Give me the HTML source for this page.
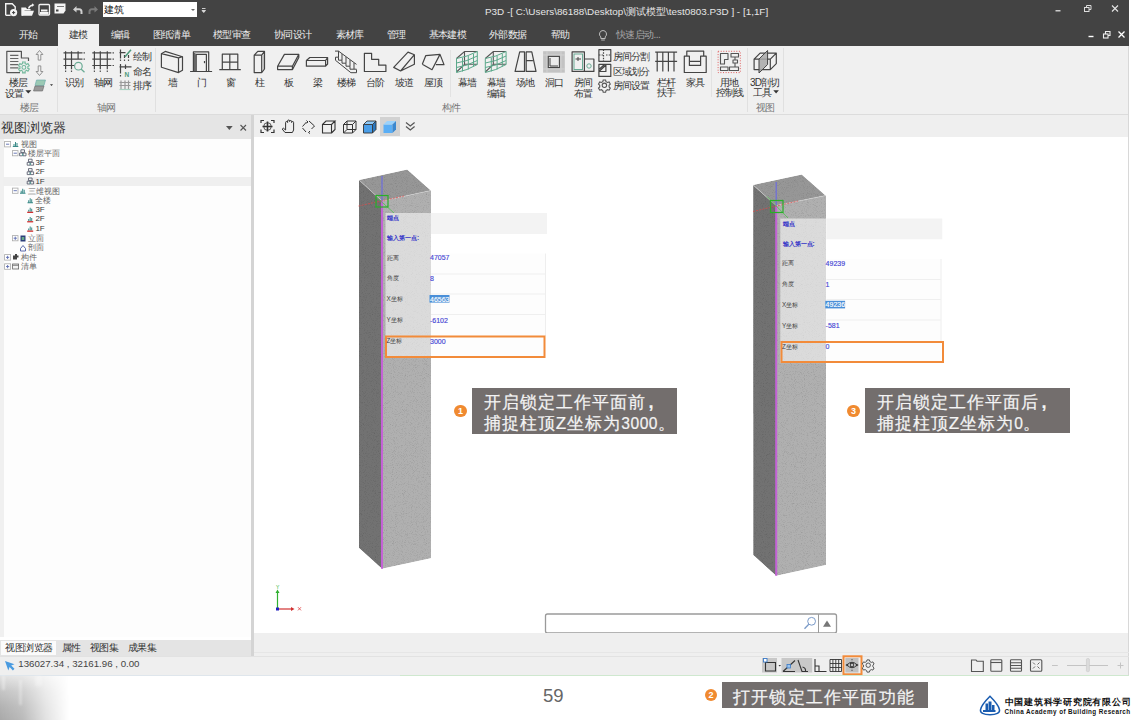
<!DOCTYPE html>
<html><head><meta charset="utf-8">
<style>
*{box-sizing:border-box;margin:0;padding:0}
html,body{width:1137px;height:720px;overflow:hidden;background:#fff;font-family:"Liberation Sans",sans-serif;position:relative}
.a{position:absolute}
.t{position:absolute;white-space:nowrap;line-height:1}
#dark{left:0;top:0;width:1129px;height:46px;background:#434343}
#ribbon{left:0;top:46px;width:1129px;height:68px;background:#f0f0f0}
#rline{left:0;top:114px;width:1129px;height:1px;background:#dcdcdc}
#lphead{left:0;top:115px;width:251px;height:24px;background:#e5e5e5}
#tree{left:0;top:139px;width:251px;height:498px;background:#fdfdfd}
#split{left:251px;top:115px;width:3px;height:541px;background:#d4d4d4}
#vtool{left:254px;top:115px;width:875px;height:22px;background:#efefef}
#view{left:254px;top:137px;width:875px;height:496px;background:#fff}
#vbot{left:254px;top:633px;width:875px;height:23px;background:#efefef}
#ltabs{left:0;top:640px;width:251px;height:16px;background:#e4e4e4}
#status{left:0;top:656px;width:1129px;height:19px;background:#efefef}
#rborder{left:1128px;top:46px;width:1px;height:629px;background:#d8d8d8}
.tab{color:#ececec;font-size:10px;letter-spacing:-0.6px;top:30px}
.rl{color:#333;font-size:10px;letter-spacing:-0.8px}
.gl{color:#777;font-size:10px;letter-spacing:-0.6px;top:103px}
.tr{font-size:8px;color:#666;font-family:"Liberation Serif",serif;margin-top:0.8px}
.tl{color:#383838;font-size:8px;font-family:"Liberation Sans",sans-serif;margin-top:0}
.dq{font-size:6.3px;color:#3434c8;font-weight:bold}
.dg{font-size:6.3px;color:#3e3e3e}
.dv{font-size:7px;color:#4646d4;font-weight:normal;-webkit-text-stroke:0.15px #4646d4}
.co{background:#736e6d}
.ct{color:#f4f4f4;font-size:17px;line-height:21.5px;letter-spacing:1.05px;-webkit-text-stroke:0.2px #f4f4f4}
.cm{font-size:18px;font-weight:bold;margin-left:2.5px}
.dn{font-size:15.6px;letter-spacing:0.5px}
.num{width:12.6px;height:12.6px;border-radius:50%;background:#f08a30;color:#fff;font-size:9px;font-weight:bold;text-align:center;line-height:12.8px}
.sep{position:absolute;width:1px;background:#e0e0e0}
</style></head><body>
<div id="dark" class="a"></div>
<div id="ribbon" class="a"></div>
<div id="rline" class="a"></div>
<div id="lphead" class="a"></div>
<div id="tree" class="a"></div><div class="a" style="left:0;top:139px;width:3.5px;height:498px;background:#f0f0f0"></div>
<div id="split" class="a"></div>
<div id="vtool" class="a"></div>
<div id="view" class="a"></div>
<div id="vbot" class="a"></div>
<div id="ltabs" class="a"></div>
<div id="status" class="a"></div>
<div id="rborder" class="a"></div>

<!-- TITLE BAR -->
<svg class="a" style="left:0;top:0" width="110" height="22" viewBox="0 0 110 22">
 <g fill="none" stroke="#f4f4f4" stroke-width="1.4">
  <path d="M5.7 15.3V3.8h6.5l3 3v3"/><path d="M5.7 15.3h5"/>
 </g>
 <circle cx="13.6" cy="12.6" r="3.6" fill="#f4f4f4"/><path d="M12 12.6h3.2M13.6 11v3.2" stroke="#434343" stroke-width="1"/>
 <path d="M21.3 7.5h4.5l1.3 1.5h3.5v1.5h-6l-1.5 5.3h-1.8z" fill="#f4f4f4"/><path d="M23.5 10.8h10.5l-2 5h-10z" fill="#f4f4f4"/><path d="M28.5 8.5c.8-2 2.5-3.3 4.5-3.5" stroke="#f4f4f4" stroke-width="1.4" fill="none"/><path d="M32 3.3l2.3 1.6-2.1 1.9z" fill="#f4f4f4"/>
 <rect x="39" y="4.5" width="10.5" height="10.5" rx="1" fill="none" stroke="#f4f4f4" stroke-width="1.3"/>
 <rect x="41" y="9.5" width="6.5" height="2" fill="#f4f4f4"/><rect x="40" y="12" width="8.5" height="2.5" fill="#f4f4f4"/>
 <path d="M54.5 3.5h11v7l-2 3h-9z" fill="#f4f4f4"/><rect x="56" y="9.5" width="2.5" height="2" fill="#434343"/><rect x="57" y="6" width="7" height="1" fill="#777"/>
 <path d="M73 9.5l3.5-3.5v2.2h2.5c2.5 0 3.5 1.5 3.5 3.5V14h-2v-2.2c0-1-0.5-1.6-1.5-1.6h-2.5v2.3z" fill="#cfcfcf"/>
 <path d="M98 9.5l-3.5-3.5v2.2H92c-2.5 0-3.5 1.5-3.5 3.5V14h2v-2.2c0-1 .5-1.6 1.5-1.6h2.5v2.3z" fill="#7a7a7a"/>
</svg>
<div class="a" style="left:103px;top:2px;width:94px;height:15px;background:#fff"></div>
<div class="t" style="left:103.5px;top:4.5px;font-size:10px;color:#111">建筑</div>
<svg class="a" style="left:188px;top:6px" width="20" height="10"><path d="M3 3h4l-2 2z" fill="#666"/><path d="M14 2.5h3.5M14 4.5h3.5l-1.75 2z" stroke="#ddd" stroke-width="0.9" fill="#ddd"/></svg>
<div class="t" id="title" style="left:485px;top:6.7px;font-size:9.9px;color:#e6e6e6">P3D -[ C:\Users\86188\Desktop\测试模型\test0803.P3D ] - [1,1F]</div>
<svg class="a" style="left:1050px;top:0" width="79" height="46">
 <path d="M5.5 10.8h5" stroke="#eee" stroke-width="1.2"/>
 <g fill="none" stroke="#ddd" stroke-width="1"><rect x="34.5" y="7.5" width="4.5" height="4"/><path d="M36.5 7.5V5.5h4.5v4h-2"/></g>
 <path d="M62 5.5l6 6M68 5.5l-6 6" stroke="#e6e6e6" stroke-width="1.1"/>
 <path d="M38.5 36.5h5" stroke="#fff" stroke-width="1.4"/>
 <g fill="none" stroke="#eee" stroke-width="1.1"><rect x="53.5" y="34" width="4.5" height="4"/><path d="M55.5 34V31.5h4.5v4h-2"/></g>
 <path d="M68.5 31.5l6 6M74.5 31.5l-6 6" stroke="#fff" stroke-width="1.3"/>
</svg>

<!-- TABS -->
<div class="a" style="left:58px;top:24px;width:41px;height:22px;background:#f0f0f0"></div>
<div class="t tab" style="left:19px">开始</div>
<div class="t tab" style="left:69px;color:#333">建模</div>
<div class="t tab" style="left:110.5px">编辑</div>
<div class="t tab" style="left:152.5px">图纸清单</div>
<div class="t tab" style="left:213px">模型审查</div>
<div class="t tab" style="left:274px">协同设计</div>
<div class="t tab" style="left:335.5px">素材库</div>
<div class="t tab" style="left:386.5px">管理</div>
<div class="t tab" style="left:428.5px">基本建模</div>
<div class="t tab" style="left:489px">外部数据</div>
<div class="t tab" style="left:550.5px">帮助</div>
<svg class="a" style="left:597px;top:29px" width="12" height="13"><path d="M6 1.5a3.6 3.6 0 0 0-2.2 6.4V9.5h4.4V7.9A3.6 3.6 0 0 0 6 1.5zM4.2 11h3.6" fill="none" stroke="#bbb" stroke-width="1"/></svg>
<div class="t tab" style="left:616px;color:#a8a8a8">快速启动...</div>


<!-- RIBBON -->
<div class="sep" style="left:57px;top:48px;height:64px"></div>
<div class="sep" style="left:155px;top:48px;height:64px"></div>
<div class="sep" style="left:449.5px;top:50px;height:47px;background:#e2e2e2"></div>
<div class="sep" style="left:711px;top:50px;height:47px;background:#e2e2e2"></div>
<div class="sep" style="left:747px;top:48px;height:64px"></div>
<div class="sep" style="left:783px;top:48px;height:64px"></div>
<svg class="a" style="left:0;top:0" width="800" height="114" viewBox="0 0 800 114">
<g fill="none" stroke="#555" stroke-width="1.2" stroke-linejoin="round">
 <!-- 楼层设置 -->
 <path d="M20 72.6H6.8V51.3h14.6V58h7.1v3"/>
 <path d="M10.1 55.4h8.3M10.1 58.5h8.3M10.1 61.5h8.3M10.1 64.6h8.3M10.1 67.8h8.3" stroke="#666"/>
 <!-- arrows -->
 <path d="M39.5 50.5l-3.4 4h2.1v5.6h2.6v-5.6h2.1z" stroke="#888" stroke-width="0.9"/>
 <path d="M39.5 75.5l-3.4-4h2.1v-5.6h2.6v5.6h2.1z" stroke="#888" stroke-width="0.9"/>
 <!-- 识别 grid -->
 <path d="M63.5 52.9h19M63.5 59.2h19M63.5 65.5h12M65.6 51.2v18M71.5 51.2v18M78.1 51.2v8" stroke="#444"/>
 <path d="M83.5 52.9h1.5M83.5 59.2h1.5M65.6 70.5v1.5M71.5 70.5v1.5" stroke="#555"/>
 <!-- 轴网 grid -->
 <path d="M92.3 52.9h19M92.3 59.2h19M92.3 65.5h19M94.4 51.2v18M100.3 51.2v18M107.3 51.2v18" stroke="#444"/>
 <path d="M112.5 52.9h1.5M112.5 59.2h1.5M112.5 65.5h1.5M94.4 70.5v1.5M100.3 70.5v1.5M107.3 70.5v1.5" stroke="#555"/>
 <!-- small grid icons -->
 <path d="M120.5 49.5v9M119.5 52.6h6M124.5 55v3M128.5 55v3" stroke="#444"/>
 <path d="M120.5 59.5v1.5M124.5 59.5v1.5M128.5 59.5v1.5" stroke="#555"/>
 <path d="M120.5 64v9.5M119.5 66.8h12M125.5 64.5v4.5M120.5 75v1.5" stroke="#444"/>
 <path d="M121 80.5v9M125 80.5v9M128.5 80.5v9M119.5 82.5h11M119.5 85.5h11" stroke="#999"/>
 <!-- 墙 -->
 <path d="M161.4 53.7L178.5 57.8V72.6L161.4 67.3z M161.4 53.7L165.2 51.4L182.5 56.7L178.5 57.8 M182.5 56.7V70.3L178.5 72.6" stroke="#444"/>
 <!-- 门 -->
 <path d="M193.4 71.4V51.9h15.3v19.5 M196.2 71.4V54.4h10.2v17 M194.8 53v18.4 M190.1 71.5h22" stroke="#444"/>
 <path d="M204.5 61v2.2" stroke="#444"/>
 <!-- 窗 -->
 <path d="M222.3 69.6V54.2h15.5v15.4 M229.8 54.2v15.4 M222.3 62.2h15.5 M219.3 69.6h21.5" stroke="#444"/>
 <!-- 柱 -->
 <path d="M254.2 55.2h7.5v17.4h-7.5z M254.2 55.2l3.6-3.8h6.7l-2.8 3.8 M264.5 51.4v17.4l-2.8 3.8" stroke="#444"/>
 <path d="M262.2 56l1.8-2.5v15l-1.8 2.5z" fill="#bbb" stroke="none"/>
 <!-- 板 -->
 <path d="M277.6 66.2l6.8-11.8h14.4l-6.4 11.8z M277.6 66.2v3.4h14.8v-3.4 M292.4 69.6l6.4-12.1v-3.1" stroke="#444"/>
 <!-- 梁 -->
 <path d="M306.4 60.5h19.2v5.7h-19.2z M306.4 60.5l3.4-3h17.8l-2 3 M327.6 57.5v6.5l-2 2.2" stroke="#444"/>
 <!-- 楼梯 -->
 <path d="M335 51.1h3.5l18 13.3 M338.5 51.1v6 M342 54v6 M346 57v6 M350 60v6 M354 63v6 M335.5 57.2v3.1l15.4 12.4h5.6v-3.2 M335.5 57.2h3v3h3.5v3h4v3h4v3h6.5" stroke="#444" stroke-width="1"/>
 <!-- 台阶 -->
 <path d="M364.4 53.3h7.2v6h7.1v5.9h7.2v6.3h-21.5z" stroke="#444"/>
 <!-- 坡道 -->
 <path d="M393.7 67.4L408 52.1l6.4 2.6v9.5l-13.8 6.8z M400.6 71L414.4 54.7" stroke="#444"/>
 <!-- 屋顶 -->
 <path d="M422.3 64.2l3.4-8.5 14.3-1.3 4 10.2h-8.1 M422.3 64.2l9.7 5.5 8-15.3" stroke="#444"/>
 <!-- 场地 -->
 <path d="M515.1 71.4l4.6-19.5h4.8v19.5z M526.2 71.4V51.9h5.6l4.2 19.5z M526.2 60.6h6.7" stroke="#444"/>
 <!-- 房间布置 -->
 <path d="M572.1 71.4V51.9h12.3v19.5z M584.4 59h9.5v12.4h-9.5" stroke="#444"/>
 <!-- 房间分割 -->
 <path d="M598.9 49.6h11.9v11.7h-11.9z" stroke="#444"/>
 <path d="M603.5 49.6v11.7M598.9 55h4.6M606 55h4.8" stroke="#444" stroke-dasharray="1.5 1.2"/>
 <!-- 区域划分 -->
 <path d="M598.9 64.4h11.9v12h-11.9z M598.9 71.5h7v-7 M599.5 69l5-4.5M599.5 71l6.5-6" stroke="#444"/>
 <!-- 栏杆 -->
 <path d="M657.2 51.6v20M662.8 51.6v20M668.4 51.6v20M674 51.6v20M655.2 52.1h21.9M655.2 61.3h21.9" stroke="#444"/>
 <!-- 家具 -->
 <path d="M686.8 56.2V51.1h16.9v5.1 M684.3 56.2h5.1V65.4h11.2V56.2h5.6v16.3h-21.9z M689.4 61.3h11.2" stroke="#444"/>
 <!-- 用地控制线 -->
 <path d="M718.1 51.3h22.2v21.3h-22.2z" stroke="#e06060" stroke-width="1" stroke-dasharray="1 1.6"/>
 <path d="M720.5 53.5h7.5v6h-3.5v4.5h-4z M731 53.5h7.5v3.5h-7.5z M733 60h4.5v3h-4.5z M720.5 67h7.5v3.5h-7.5z M729.5 67h9v3.5h-9z M735 57v3M735 63v4" stroke="#555" stroke-width="1.1"/>
 <!-- 3D剖切 -->
 <path d="M754.1 59.1h16.2v10.5h-16.2z M754.1 59.1l6-6h16.2l-6 6 M776.3 53.1v10.5l-6 6" stroke="#444"/>
</g>
<!-- gear teal 楼层设置 -->
<g transform="translate(23.9 67.4)" fill="none" stroke="#72b89c" stroke-width="1.1">
 <circle r="1.9"/><path d="M-1.55 -3.69 L-1.14 -3.84 L-1.31 -5.45 L1.31 -5.45 L1.14 -3.84 L1.55 -3.69 L2.42 -3.19 L2.75 -2.90 L4.06 -3.85 L5.37 -1.59 L3.89 -0.93 L3.97 -0.50 L3.97 0.50 L3.89 0.93 L5.37 1.59 L4.06 3.85 L2.75 2.90 L2.42 3.19 L1.55 3.69 L1.14 3.84 L1.31 5.45 L-1.31 5.45 L-1.14 3.84 L-1.55 3.69 L-2.42 3.19 L-2.75 2.90 L-4.06 3.85 L-5.37 1.59 L-3.89 0.93 L-3.97 0.50 L-3.97 -0.50 L-3.89 -0.93 L-5.37 -1.59 L-4.06 -3.85 L-2.75 -2.90 L-2.42 -3.19Z"/>
</g>
<!-- stack icon -->
<path d="M36.5 80h9l-1.5 5.5h-9z" fill="#9bc9b4" stroke="#6aa" stroke-width="0.6"/>
<path d="M35 86h9l-1.5 5h-9z" fill="#999" stroke="#666" stroke-width="0.6"/>
<path d="M50 84.3h3l-1.5 1.6z" fill="#333"/>
<path d="M25.3 90.3h6l-3 3.3z" fill="#333"/>
<!-- magnifier -->
<circle cx="78.4" cy="66.2" r="3.8" fill="#f0f0f0" stroke="#6aab95" stroke-width="1.2"/>
<path d="M81 69l3.5 3.2" stroke="#6aab95" stroke-width="1.3"/>
<path d="M125 56.7l6-7" stroke="#4d9a7a" stroke-width="1.5"/>
<text x="124.6" y="77.2" font-family="Liberation Sans" font-weight="bold" font-size="6.5" fill="#4d9a7a">N</text>
<path d="M119.5 89.5h11" stroke="#a8d0c0" stroke-width="1.2"/>
<!-- 幕墙 -->
<g id="cw">
<path d="M456.5 58.5L464.5 51.5H477.3M464.5 51.5V64.3H477.3M464.5 64.3L456.5 72" stroke="#555" stroke-width="1.1" fill="none"/>
<path d="M456.5 58.5Q467 57 477.3 51.5V64.5Q467 70.5 456.5 72.5Z M462.5 57.8V71.5M468.3 56V69.5M473.5 53.8V66.5M456.5 63Q467 61.5 477.3 56M456.5 67.5Q467 66 477.3 60.5" stroke="#5aa88a" stroke-width="1" fill="none"/>
</g>
<use href="#cw" x="28.8" y="0"/>
<!-- 洞口 -->
<rect x="543.1" y="51.2" width="21.7" height="21.5" fill="#c3c3c3"/>
<path d="M547 51.2v21.5M561 51.2v21.5M543.1 55h21.7M543.1 69h21.7" stroke="#d6d6d6" stroke-width="0.8"/>
<rect x="548.3" y="56.4" width="11.1" height="11.1" fill="#ececec" stroke="#444" stroke-width="1.1"/>
<path d="M550 58v8h8" stroke="#444" stroke-width="1" fill="none"/>
<!-- 房间布置 teal -->
<rect x="574" y="54" width="8.5" height="15.5" fill="none" stroke="#6aab95" stroke-width="1"/>
<path d="M575.5 59h5.5M578 57v4" stroke="#444" stroke-width="1"/>
<circle cx="589" cy="66" r="2.2" fill="none" stroke="#6aab95" stroke-width="1"/>
<!-- gear 房间设置 -->
<g transform="translate(604.4 85.3)" fill="none" stroke="#555" stroke-width="1.1">
 <circle r="2.2"/><path d="M-1.2-5.3h2.4l.4 1.6 1.5.9 1.6-.5 1.2 2.1-1.2 1.1v1.8l1.2 1.1-1.2 2.1-1.6-.5-1.5.9-.4 1.6h-2.4l-.4-1.6-1.5-.9-1.6.5-1.2-2.1 1.2-1.1V-.1l-1.2-1.1 1.2-2.1 1.6.5 1.5-.9z"/>
</g>
<!-- 3D plane -->
<path d="M759 73l0-14 8.6-8.5v14z" fill="#a8a8a8" fill-opacity="0.85" stroke="#444" stroke-width="1"/>
<path d="M773.3 90.3h5.6l-2.8 3.3z" fill="#333"/>
</svg>
<div class="t rl" style="left:8.5px;top:77.5px">楼层</div>
<div class="t rl" style="left:5px;top:88.5px">设置</div>
<div class="t gl" style="left:20px">楼层</div>
<div class="t rl" style="left:65px;top:77.5px">识别</div>
<div class="t rl" style="left:94px;top:77.5px">轴网</div>
<div class="t rl" style="left:133px;top:51.5px">绘制</div>
<div class="t rl" style="left:133px;top:66.5px">命名</div>
<div class="t rl" style="left:133px;top:81px">排序</div>
<div class="t gl" style="left:97px">轴网</div>
<div class="t rl" style="left:167.5px;top:77.5px">墙</div>
<div class="t rl" style="left:196.5px;top:77.5px">门</div>
<div class="t rl" style="left:225.5px;top:77.5px">窗</div>
<div class="t rl" style="left:254.5px;top:77.5px">柱</div>
<div class="t rl" style="left:283.5px;top:77.5px">板</div>
<div class="t rl" style="left:312.5px;top:77.5px">梁</div>
<div class="t rl" style="left:336.5px;top:77.5px">楼梯</div>
<div class="t rl" style="left:365.5px;top:77.5px">台阶</div>
<div class="t rl" style="left:395px;top:77.5px">坡道</div>
<div class="t rl" style="left:423.5px;top:77.5px">屋顶</div>
<div class="t rl" style="left:457.5px;top:77.5px">幕墙</div>
<div class="t rl" style="left:486.5px;top:77.5px">幕墙</div>
<div class="t rl" style="left:486.5px;top:88.5px">编辑</div>
<div class="t rl" style="left:516px;top:77.5px">场地</div>
<div class="t rl" style="left:545px;top:77.5px">洞口</div>
<div class="t rl" style="left:573.5px;top:77.5px">房间</div>
<div class="t rl" style="left:573.5px;top:88.5px">布置</div>
<div class="t rl" style="left:612.5px;top:51.5px">房间分割</div>
<div class="t rl" style="left:612.5px;top:67px">区域划分</div>
<div class="t rl" style="left:612.5px;top:81px">房间设置</div>
<div class="t rl" style="left:657px;top:77.5px">栏杆</div>
<div class="t rl" style="left:657px;top:88px">扶手</div>
<div class="t rl" style="left:686px;top:77.5px">家具</div>
<div class="t rl" style="left:720px;top:77.5px">用地</div>
<div class="t rl" style="left:715.5px;top:88px">控制线</div>
<div class="t rl" style="left:750px;top:77.5px">3D剖切</div>
<div class="t rl" style="left:753px;top:88px">工具</div>
<div class="t gl" style="left:441.5px">构件</div>
<div class="t gl" style="left:756px">视图</div>

<!-- LEFT PANEL -->
<div class="t" style="left:1px;top:122.2px;font-size:12.5px;color:#333">视图浏览器</div>
<svg class="a" style="left:220px;top:119px" width="30" height="18"><path d="M6 7h6.7l-3.35 4z" fill="#555"/><path d="M20.5 6l5.5 5.5M26 6l-5.5 5.5" stroke="#555" stroke-width="1.1"/></svg>
<div class="a" style="left:3px;top:177px;width:248px;height:9px;background:#efefef"></div>
<svg class="a" style="left:0;top:138px" width="70" height="135" viewBox="0 138 70 135">
 <g fill="#fff" stroke="#aaa" stroke-width="0.8">
  <rect x="4.6" y="141.4" width="6" height="5.5"/>
  <rect x="12.5" y="150.6" width="5.5" height="5.2"/>
  <rect x="12.5" y="188.1" width="5.5" height="5.2"/>
  <rect x="12.5" y="235.6" width="5.5" height="5.2"/>
  <rect x="4.6" y="254.6" width="6" height="5.5"/>
  <rect x="4.6" y="263.8" width="6" height="5.5"/>
 </g>
 <g stroke="#5b6bb0" stroke-width="0.9">
  <path d="M6 144.2h3.2M13.6 153.2h3.3M13.6 190.7h3.3M13.6 238.2h3.3M15.25 236.6v3.3M6 257.35h3.2M7.6 255.8v3.2M6 266.55h3.2M7.6 265v3.2"/>
 </g>
 <!-- bar icons -->
 <g fill="#3a8a88">
  <path d="M12.8 147h5.5v-1h-5.5z M13.5 146v-2h1v2z M15 146v-4h1v4z M16.5 146v-3h1v3z"/>
  <path d="M20 193.8h5.5v-1H20z M20.7 192.8v-2h1v2z M22.2 192.8v-4h1v4z M23.7 192.8v-3h1v3z"/>
  <path d="M27.5 203.3h5.5v-1h-5.5z M28.2 202.3v-2h1v2z M29.7 202.3v-4h1v4z M31.2 202.3v-3h1v3z"/>
  <path d="M28.2 211.7v-2h1v2z M29.7 211.7v-4h1v4z M31.2 211.7v-3h1v3z"/>
  <path d="M28.2 221.1v-2h1v2z M29.7 221.1v-4h1v4z M31.2 221.1v-3h1v3z"/>
  <path d="M28.2 230.5v-2h1v2z M29.7 230.5v-4h1v4z M31.2 230.5v-3h1v3z"/>
 </g>
 <g fill="#d03030"><rect x="27.2" y="211.7" width="6" height="1.3"/><rect x="27.2" y="221.1" width="6" height="1.3"/><rect x="27.2" y="230.5" width="6" height="1.3"/></g>
 <!-- plan icons -->
 <g fill="none" stroke="#555a6a" stroke-width="0.85"><path d="M20.900000000000002 149.8h3.6v2.6h-3.6z M19.6 153.0h3v2.8h-3z M23.0 153.0h3v2.8h-3z"/><path d="M28.5 159.2h3.6v2.6h-3.6z M27.2 162.39999999999998h3v2.8h-3z M30.599999999999998 162.39999999999998h3v2.8h-3z"/><path d="M28.5 168.6h3.6v2.6h-3.6z M27.2 171.79999999999998h3v2.8h-3z M30.599999999999998 171.79999999999998h3v2.8h-3z"/><path d="M28.5 178h3.6v2.6h-3.6z M27.2 181.2h3v2.8h-3z M30.599999999999998 181.2h3v2.8h-3z"/></g>
 <g fill="#5aa8a0"><rect x="22" y="153.6" width="1.2" height="2"/><rect x="29.6" y="163" width="1.2" height="2"/><rect x="29.6" y="172.4" width="1.2" height="2"/><rect x="29.6" y="181.8" width="1.2" height="2"/></g>
 <rect x="20.5" y="235.5" width="5" height="6" fill="#2d3e7a"/><rect x="21.7" y="237" width="2.6" height="3" fill="#6a8"/>
 <path d="M20.5 248.5l2.5-3 2.5 3v2.5h-5z" fill="none" stroke="#4a5aa0" stroke-width="0.9"/>
 <path d="M13 255.5h2v-1.5h2v1.5h1.5v2h-1.5v2h-4z" fill="#444"/>
 <rect x="12.6" y="264" width="6" height="5" fill="#f4f4f4" stroke="#666" stroke-width="0.8"/><path d="M12.6 265.3h6" stroke="#666" stroke-width="0.8"/>
</svg>
<div class="t tr" style="left:21px;top:140.2px">视图</div>
<div class="t tr" style="left:28px;top:149.7px">楼层平面</div>
<div class="t tr tl" style="left:35.4px;top:159px">3F</div>
<div class="t tr tl" style="left:35.4px;top:168.4px">2F</div>
<div class="t tr tl" style="left:35.4px;top:177.8px">1F</div>
<div class="t tr" style="left:28px;top:187.2px">三维视图</div>
<div class="t tr" style="left:35.4px;top:196.6px">全楼</div>
<div class="t tr tl" style="left:35.4px;top:205.9px">3F</div>
<div class="t tr tl" style="left:35.4px;top:215.3px">2F</div>
<div class="t tr tl" style="left:35.4px;top:224.7px">1F</div>
<div class="t tr" style="left:28px;top:234.3px">立面</div>
<div class="t tr" style="left:28px;top:243.6px">剖面</div>
<div class="t tr" style="left:21px;top:253.2px">构件</div>
<div class="t tr" style="left:21px;top:262.5px">清单</div>
<!-- bottom tabs -->
<div class="a" style="left:1px;top:640.5px;width:55px;height:14.5px;background:#fbfbfb"></div>
<div class="t" style="left:5px;top:643px;font-size:10px;letter-spacing:-0.4px;color:#333">视图浏览器</div>
<div class="t" style="left:61.5px;top:643px;font-size:10px;letter-spacing:-0.4px;color:#333">属性</div>
<div class="t" style="left:89.5px;top:643px;font-size:10px;letter-spacing:-0.4px;color:#333">视图集</div>
<div class="t" style="left:127.5px;top:643px;font-size:10px;letter-spacing:-0.4px;color:#333">成果集</div>
<!-- status -->
<svg class="a" style="left:4px;top:660px" width="12" height="11"><path d="M1 1l9.5 3.2-3.3 1.3 3.3 3.3-1.6 1.6-3.3-3.3-1.3 3.3z" fill="#4a9be0"/></svg>
<div class="t" id="coords" style="left:18.3px;top:659px;font-size:9.7px;color:#444">136027.34 , 32161.96 , 0.00</div>

<!-- VIEWPORT TOOLBAR -->
<div class="a" style="left:380px;top:116.7px;width:19.5px;height:19px;background:#d2d2d2"></div>
<svg class="a" style="left:254px;top:115px" width="170" height="22" viewBox="254 115 170 22">
 <g fill="none" stroke="#333" stroke-width="1.2">
  <path d="M261 123v-2.5h3M271 120.5h3v2.5M274 129.5v3h-3M264 132.5h-3v-3"/>
  <path d="M267.5 121.5v10M262.5 126.5h10" stroke-width="1.6"/>
  <circle cx="267.5" cy="126.5" r="3.8" stroke-width="0.8"/>
  <path d="M285 132.5l-2.8-3.5 1.2-.8 2.2 1.8v-7.5a1 1 0 0 1 2 0v-1.5a1 1 0 0 1 2 0v.5a1 1 0 0 1 2 0v1a1 1 0 0 1 2 0v7.5l-1.2 2.5z" stroke-width="1"/>
  <path d="M302.5 126.5l4-4.5M309 121l5.5 5-3 3M306 132l-3.5-4" stroke-width="1"/>
  <path d="M306.5 120.5l1.5 1.5-1.5 1.2M310 131l-1.5 1.5 1.5 1" stroke-width="1"/>
  <path d="M322.5 124.5h9v8.5h-9z M322.5 124.5l3.5-3.5h9l-3.5 3.5 M335 121v8.5l-3.5 3.5" stroke-width="1.1"/>
  <path d="M343.5 124.5h9v8.5h-9z M343.5 124.5l3.5-3.5h9l-3.5 3.5 M356 121v8.5l-3.5 3.5 M347 121v8.5h9M347 129.5l-3.5 3.5" stroke-width="1"/>
  <path d="M406 122.5l4.3 3.5 4.3-3.5M406 126.5l4.3 3.5 4.3-3.5" stroke="#555" stroke-width="1.2"/>
 </g>
 <path d="M363.5 124.5h9v8.5h-9z" fill="#4a9ee8"/><path d="M363.5 124.5l3.5-3.5h9l-3.5 3.5z" fill="#8cc8f8"/><path d="M372.5 124.5l3.5-3.5v8.5l-3.5 3.5z" fill="#2a78c0"/>
 <path d="M363.5 124.5h9v8.5h-9z M363.5 124.5l3.5-3.5h9l-3.5 3.5 M376 121v8.5l-3.5 3.5" fill="none" stroke="#333" stroke-width="0.9"/>
 <path d="M383.5 124.5h9v8.5h-9z" fill="#5aaef5"/><path d="M383.5 124.5l3.5-3.5h9l-3.5 3.5z" fill="#9ad2fc"/><path d="M392.5 124.5l3.5-3.5v8.5l-3.5 3.5z" fill="#3a88d0"/>
</svg>

<!-- SCENE -->
<svg class="a" style="left:254px;top:137px" width="875" height="496" viewBox="254 137 875 496">
 <defs>
  <filter id="nz" x="0" y="0" width="100%" height="100%" color-interpolation-filters="sRGB">
   <feTurbulence type="fractalNoise" baseFrequency="1.1" numOctaves="2" seed="7" result="n"/>
   <feColorMatrix in="n" type="matrix" values="0.33 0.33 0.33 0 0  0.33 0.33 0.33 0 0  0.33 0.33 0.33 0 0  0 0 0 0 1" result="g"/>
   <feComponentTransfer in="g" result="g2"><feFuncR type="linear" slope="0.5" intercept="0.75"/><feFuncG type="linear" slope="0.5" intercept="0.75"/><feFuncB type="linear" slope="0.5" intercept="0.75"/></feComponentTransfer>
   <feBlend in="SourceGraphic" in2="g2" mode="multiply" result="m"/>
   <feComposite in="m" in2="SourceGraphic" operator="in"/>
  </filter>
 </defs>
 <g id="col1">
  <g filter="url(#nz)"><path d="M359 180L407.2 169.4L430.8 190.6L382 201z" fill="#979797"/>
  <path d="M359 180L382 201V568.8L359 548z" fill="#727272"/>
  <path d="M382 201L431 190.6V558.3L382 568.8z" fill="#b0b0b0"/></g>
  <path d="M359 180L382 201L430.8 190.6" fill="none" stroke="#c8c8c8" stroke-width="0.8" stroke-opacity="0.7"/>
  <path d="M382 201V568.8" stroke="#c462d6" stroke-width="2"/>
  <path d="M382 176V201" stroke="#7070d8" stroke-width="1.3"/>
  <path d="M358.5 206L404 196" stroke="#e04848" stroke-width="0.9" stroke-opacity="0.8" stroke-dasharray="2 1.2"/>
  <path d="M375 196L394 213" stroke="#50c050" stroke-width="0.8"/>
  <rect x="376" y="195.5" width="12" height="11.5" fill="none" stroke="#28b028" stroke-width="1.2"/>
 </g>
 <g id="col2">
  <g filter="url(#nz)"><path d="M753.1 185L801.7 174.4L825.6 195.6L776.1 205.6z" fill="#979797"/>
  <path d="M753.1 185L776.1 205.6V575.7L753.2 555z" fill="#727272"/>
  <path d="M776.1 205.6L826 195.6V565L776.4 575.7z" fill="#b0b0b0"/></g>
  <path d="M753.1 185L776.1 205.6L825.6 195.6" fill="none" stroke="#c8c8c8" stroke-width="0.8" stroke-opacity="0.7"/>
  <path d="M776.2 205.6V575.7" stroke="#c462d6" stroke-width="2"/>
  <path d="M776.2 182V205.6" stroke="#7070d8" stroke-width="1.3"/>
  <path d="M753 211.5L798 201" stroke="#e04848" stroke-width="0.9" stroke-opacity="0.8" stroke-dasharray="2 1.2"/>
  <path d="M767 196.5L788 218" stroke="#50c050" stroke-width="0.8"/>
  <rect x="770.5" y="200.5" width="12.5" height="12" fill="none" stroke="#28b028" stroke-width="1.2"/>
 </g>
 <!-- dialog 1 -->
 <g id="dlg1">
  <rect x="385.5" y="213" width="45.5" height="144.6" fill="#fff" fill-opacity="0.55"/>
  <rect x="431" y="213" width="116" height="21" fill="#f3f3f3"/>
  <rect x="431" y="234" width="116" height="19.5" fill="#fff"/>
  <rect x="431" y="253.5" width="114.5" height="104" fill="#fdfdfd"/>
  <path d="M431 274h114.5M431 294h114.5M431 314.5h114.5" stroke="#efefef" stroke-width="1"/>
  <path d="M545.5 253.5V336" stroke="#eeeeee" stroke-width="1"/>
  <rect x="429.5" y="295" width="20" height="7.6" fill="#4a8fd8"/>
  <rect x="386" y="336.5" width="158.5" height="20.5" fill="none" stroke="#f28b3a" stroke-width="2"/>
 </g>
 <g id="dlg2">
  <rect x="780.3" y="218.5" width="46" height="144.6" fill="#fff" fill-opacity="0.55"/>
  <rect x="826.3" y="218.5" width="116" height="21" fill="#f3f3f3"/>
  <rect x="826.3" y="239.5" width="116" height="19.5" fill="#fff"/>
  <rect x="826.3" y="259" width="114.5" height="104" fill="#fdfdfd"/>
  <path d="M826.3 279.5h114.5M826.3 299.5h114.5M826.3 320h114.5" stroke="#efefef" stroke-width="1"/>
  <path d="M941 259V341" stroke="#eeeeee" stroke-width="1"/>
  <rect x="825.3" y="300.8" width="19.8" height="7.6" fill="#4a8fd8"/>
  <rect x="781.5" y="342" width="161.5" height="20" fill="none" stroke="#f28b3a" stroke-width="2"/>
 </g>
 <!-- axis indicator -->
 <path d="M277.5 609V592" stroke="#30b030" stroke-width="1.2"/><path d="M275.5 593l2-3.5 2 3.5z" fill="#30b030"/>
 <path d="M277.5 609H292" stroke="#d03030" stroke-width="1.2"/><path d="M291 607l3.5 2-3.5 2z" fill="#d03030"/>
 <rect x="276" y="607.5" width="3" height="3" fill="#2020c0"/>
 <text x="276" y="589" font-family="Liberation Sans" font-size="5" fill="#30b030">Y</text>
 <path d="M298 607.2l3 3.2M301 607.2l-3 3.2" stroke="#e04040" stroke-width="0.8"/>
 <!-- search box -->
 <rect x="545.5" y="614" width="291" height="19" rx="2" fill="#fff" stroke="#9a9a9a" stroke-width="1.3"/>
 <path d="M818.5 614V633" stroke="#9a9a9a" stroke-width="1"/>
 <circle cx="811.6" cy="621.3" r="3.9" fill="none" stroke="#7a9ac8" stroke-width="1"/>
 <path d="M808.8 624.2l-4.3 4.5" stroke="#7a9ac8" stroke-width="1.3"/>
 <path d="M823 626.7l4-6.3 4 6.3z" fill="#777"/>
</svg>
<!-- dialog texts -->
<div class="t dq" style="left:387px;top:215px">端点</div>
<div class="t dq" style="left:387px;top:235px">输入第一点:</div>
<div class="t dg" style="left:386.5px;top:254.5px">距离</div>
<div class="t dg" style="left:386.5px;top:275px">角度</div>
<div class="t dg" style="left:386.5px;top:296px">X坐标</div>
<div class="t dg" style="left:386.5px;top:317px">Y坐标</div>
<div class="t dg" style="left:386.5px;top:338px">Z坐标</div>
<div class="t dv" style="left:430px;top:254.2px">47057</div>
<div class="t dv" style="left:430px;top:275px">8</div>
<div class="t dv" style="left:430px;top:295.8px;color:#fff;-webkit-text-stroke-color:#fff">46563</div>
<div class="t dv" style="left:430px;top:316.8px">-6102</div>
<div class="t dv" style="left:430px;top:337.8px">3000</div>
<div class="t dq" style="left:782.5px;top:220.5px">端点</div>
<div class="t dq" style="left:782.5px;top:240.5px">输入第一点:</div>
<div class="t dg" style="left:782px;top:260px">距离</div>
<div class="t dg" style="left:782px;top:280.5px">角度</div>
<div class="t dg" style="left:782px;top:301.5px">X坐标</div>
<div class="t dg" style="left:782px;top:322.5px">Y坐标</div>
<div class="t dg" style="left:782px;top:343.5px">Z坐标</div>
<div class="t dv" style="left:825.6px;top:259.7px">49239</div>
<div class="t dv" style="left:825.6px;top:280.5px">1</div>
<div class="t dv" style="left:825.6px;top:301.3px;color:#fff;-webkit-text-stroke-color:#fff">49236</div>
<div class="t dv" style="left:825.6px;top:322.3px">-581</div>
<div class="t dv" style="left:825.6px;top:343.3px">0</div>

<!-- CALLOUTS -->
<div class="a co" style="left:472px;top:388px;width:205px;height:45.5px"></div>
<div class="t ct" style="left:483.5px;top:391.5px">开启锁定工作平面前<span class="cm">,</span><br>捕捉柱顶Z坐标为<span class="dn">3000</span>。</div>
<div class="a co" style="left:865px;top:388.2px;width:205px;height:45.3px"></div>
<div class="t ct" style="left:876.5px;top:391.5px">开启锁定工作平面后<span class="cm">,</span><br>捕捉柱顶Z坐标为<span class="dn">0</span>。</div>
<div class="a num" style="left:454.3px;top:404.9px">1</div>
<div class="a num" style="left:847.2px;top:404.6px">3</div>

<!-- STATUS BAR ICONS -->
<div class="a" style="left:254px;top:651.5px;width:875px;height:1px;background:#e6e6e6"></div><div class="a" style="left:0;top:655.5px;width:1129px;height:1px;background:#e2e2e2"></div>
<svg class="a" style="left:755px;top:652px" width="374" height="24" viewBox="755 652 374 24">
 <rect x="762" y="658" width="15" height="14.5" fill="#c8c8c8"/>
 <rect x="781.5" y="658" width="30.7" height="14.5" fill="#c8c8c8"/>
 <rect x="845.3" y="658" width="13.2" height="14.5" fill="#c0c0c0"/>
 <g fill="none" stroke="#333" stroke-width="1.1">
  <path d="M765.5 661v10h10v-8.5h-10"/>
  <path d="M783 671.5h12M783 671.5l12-11"/>
  <path d="M798 660l4 11.5h6M802.5 667a4 4 0 0 1 3 4.5"/>
  <path d="M815 659v12.5h11.5M815 666h4v5.5"/>
  <path d="M830 659.5h11.5v12h-11.5z M830 663.5h11.5M830 667.5h11.5M832.9 659.5v12M835.8 659.5v12M838.7 659.5v12" stroke-width="0.9"/>
  <path d="M847 665Q852 659.5 857 665Q852 670.5 847 665z" stroke-width="1"/>
 </g>
 <rect x="763.5" y="658.5" width="3.5" height="3.5" fill="#fff" stroke="#3a7ac8" stroke-width="0.9"/>
 <rect x="787" y="664.5" width="3.5" height="3.5" fill="#9cc4ec" stroke="#3a7ac8" stroke-width="0.8"/>
 <path d="M778.5 665h2.5l-1.25 1.5z" fill="#333"/>
 <rect x="850.5" y="663.5" width="3" height="3" fill="none" stroke="#333" stroke-width="0.8"/><path d="M845.5 665l2-1.5v3zM858.5 665l-2-1.5v3z" fill="#333"/><path d="M852 659v1.3M852 669.7v1.3" stroke="#333" stroke-width="0.8"/>
 <rect x="843.5" y="656.3" width="18" height="18" fill="none" stroke="#f28b3a" stroke-width="2"/>
 <g transform="translate(868.2 665.2)" fill="none" stroke="#555" stroke-width="1">
  <circle r="2.2"/><path d="M-1.2-5.3h2.4l.4 1.6 1.5.9 1.6-.5 1.2 2.1-1.2 1.1v1.8l1.2 1.1-1.2 2.1-1.6-.5-1.5.9-.4 1.6h-2.4l-.4-1.6-1.5-.9-1.6.5-1.2-2.1 1.2-1.1V-.1l-1.2-1.1 1.2-2.1 1.6.5 1.5-.9z"/>
 </g>
 <g fill="none" stroke="#555" stroke-width="1.1">
  <path d="M971.5 660h4.5l1 1.2h6.3v10.3h-11.8z"/>
  <rect x="990.8" y="659.8" width="11" height="11.5" rx="0.8"/><path d="M990.8 662.5h11"/>
  <rect x="1010.5" y="659.8" width="11" height="11.5" rx="0.8"/><path d="M1010.5 662.8h11M1010.5 665.5h11M1010.5 668.3h11"/>
  <rect x="1030.5" y="659.8" width="11.3" height="11.5" rx="1"/>
 </g>
 <path d="M1033 662.5l2 2M1039.5 662.5l-2 2M1033 668.5l2-2M1039.5 668.5l-2-2" stroke="#555" stroke-width="0.9"/>
 <path d="M1052 665.5h5.8M1067 665.5h41M1117.5 665.5h6M1120.5 662.5v6" stroke="#c4c4c4" stroke-width="1"/>
 <rect x="1086.4" y="658.6" width="3" height="13" rx="1" fill="#dcdcdc" stroke="#c8c8c8" stroke-width="0.6"/>
</svg>
<div class="a" style="left:0;top:675px;width:400px;height:1px;background:#dfe6ec"></div><div class="a" style="left:400px;top:675px;width:729px;height:1px;background:#cfe8cf"></div>

<!-- SLIDE BOTTOM -->
<div class="a" style="left:0;top:676px;width:75px;height:44px;background:linear-gradient(to bottom,#e2e2e2 0%,#c4c4c4 35%,#b2b2b2 70%,#a9a9a9 100%);-webkit-mask-image:linear-gradient(to right,#000 0%,rgba(0,0,0,.8) 30%,rgba(0,0,0,.35) 60%,transparent 92%)"></div>
<div class="a" style="left:2px;top:676px;width:3px;height:14px;background:rgba(255,255,255,.35);filter:blur(1px)"></div><div class="a" style="left:19px;top:680px;width:3px;height:25px;background:rgba(255,255,255,.3);filter:blur(1px)"></div><div class="a" style="left:35px;top:676px;width:7px;height:10px;background:rgba(255,255,255,.3);filter:blur(1.5px)"></div>
<div class="t" style="left:543px;top:687px;font-size:18.5px;color:#666">59</div>
<div class="a co" style="left:721.6px;top:682.3px;width:206.5px;height:26.2px"></div>
<div class="t ct" style="left:733px;top:686.5px;font-size:17px;letter-spacing:1.2px">打开锁定工作平面功能</div>
<div class="a num" style="left:704.7px;top:688.7px">2</div>
<svg class="a" style="left:978px;top:694px" width="24" height="23" viewBox="978 694 24 23">
 <path d="M990 696.3c3 3 9 10 9.5 13.5 .5 3-3 5-9.5 5s-10-2-9.5-5c.5-3.5 6.5-10.5 9.5-13.5z" fill="none" stroke="#1a5cb0" stroke-width="1.5"/>
 <rect x="985.5" y="703.5" width="2.5" height="8" fill="#1a5cb0"/><rect x="988.5" y="701.5" width="3" height="10" fill="#1a5cb0"/><rect x="992" y="705" width="2.5" height="6.5" fill="#1a5cb0"/><rect x="983" y="710" width="12.5" height="2" fill="#1a5cb0"/>
</svg>
<div class="t" style="left:1004.5px;top:698px;font-size:9px;color:#111;font-family:'Liberation Serif',serif;font-weight:bold;letter-spacing:0.75px">中国建筑科学研究院有限公司</div>
<div class="t" style="left:1004.5px;top:709.2px;font-size:6.3px;color:#111;font-weight:bold;letter-spacing:0.42px">China Academy of Building Research</div>
</body></html>
